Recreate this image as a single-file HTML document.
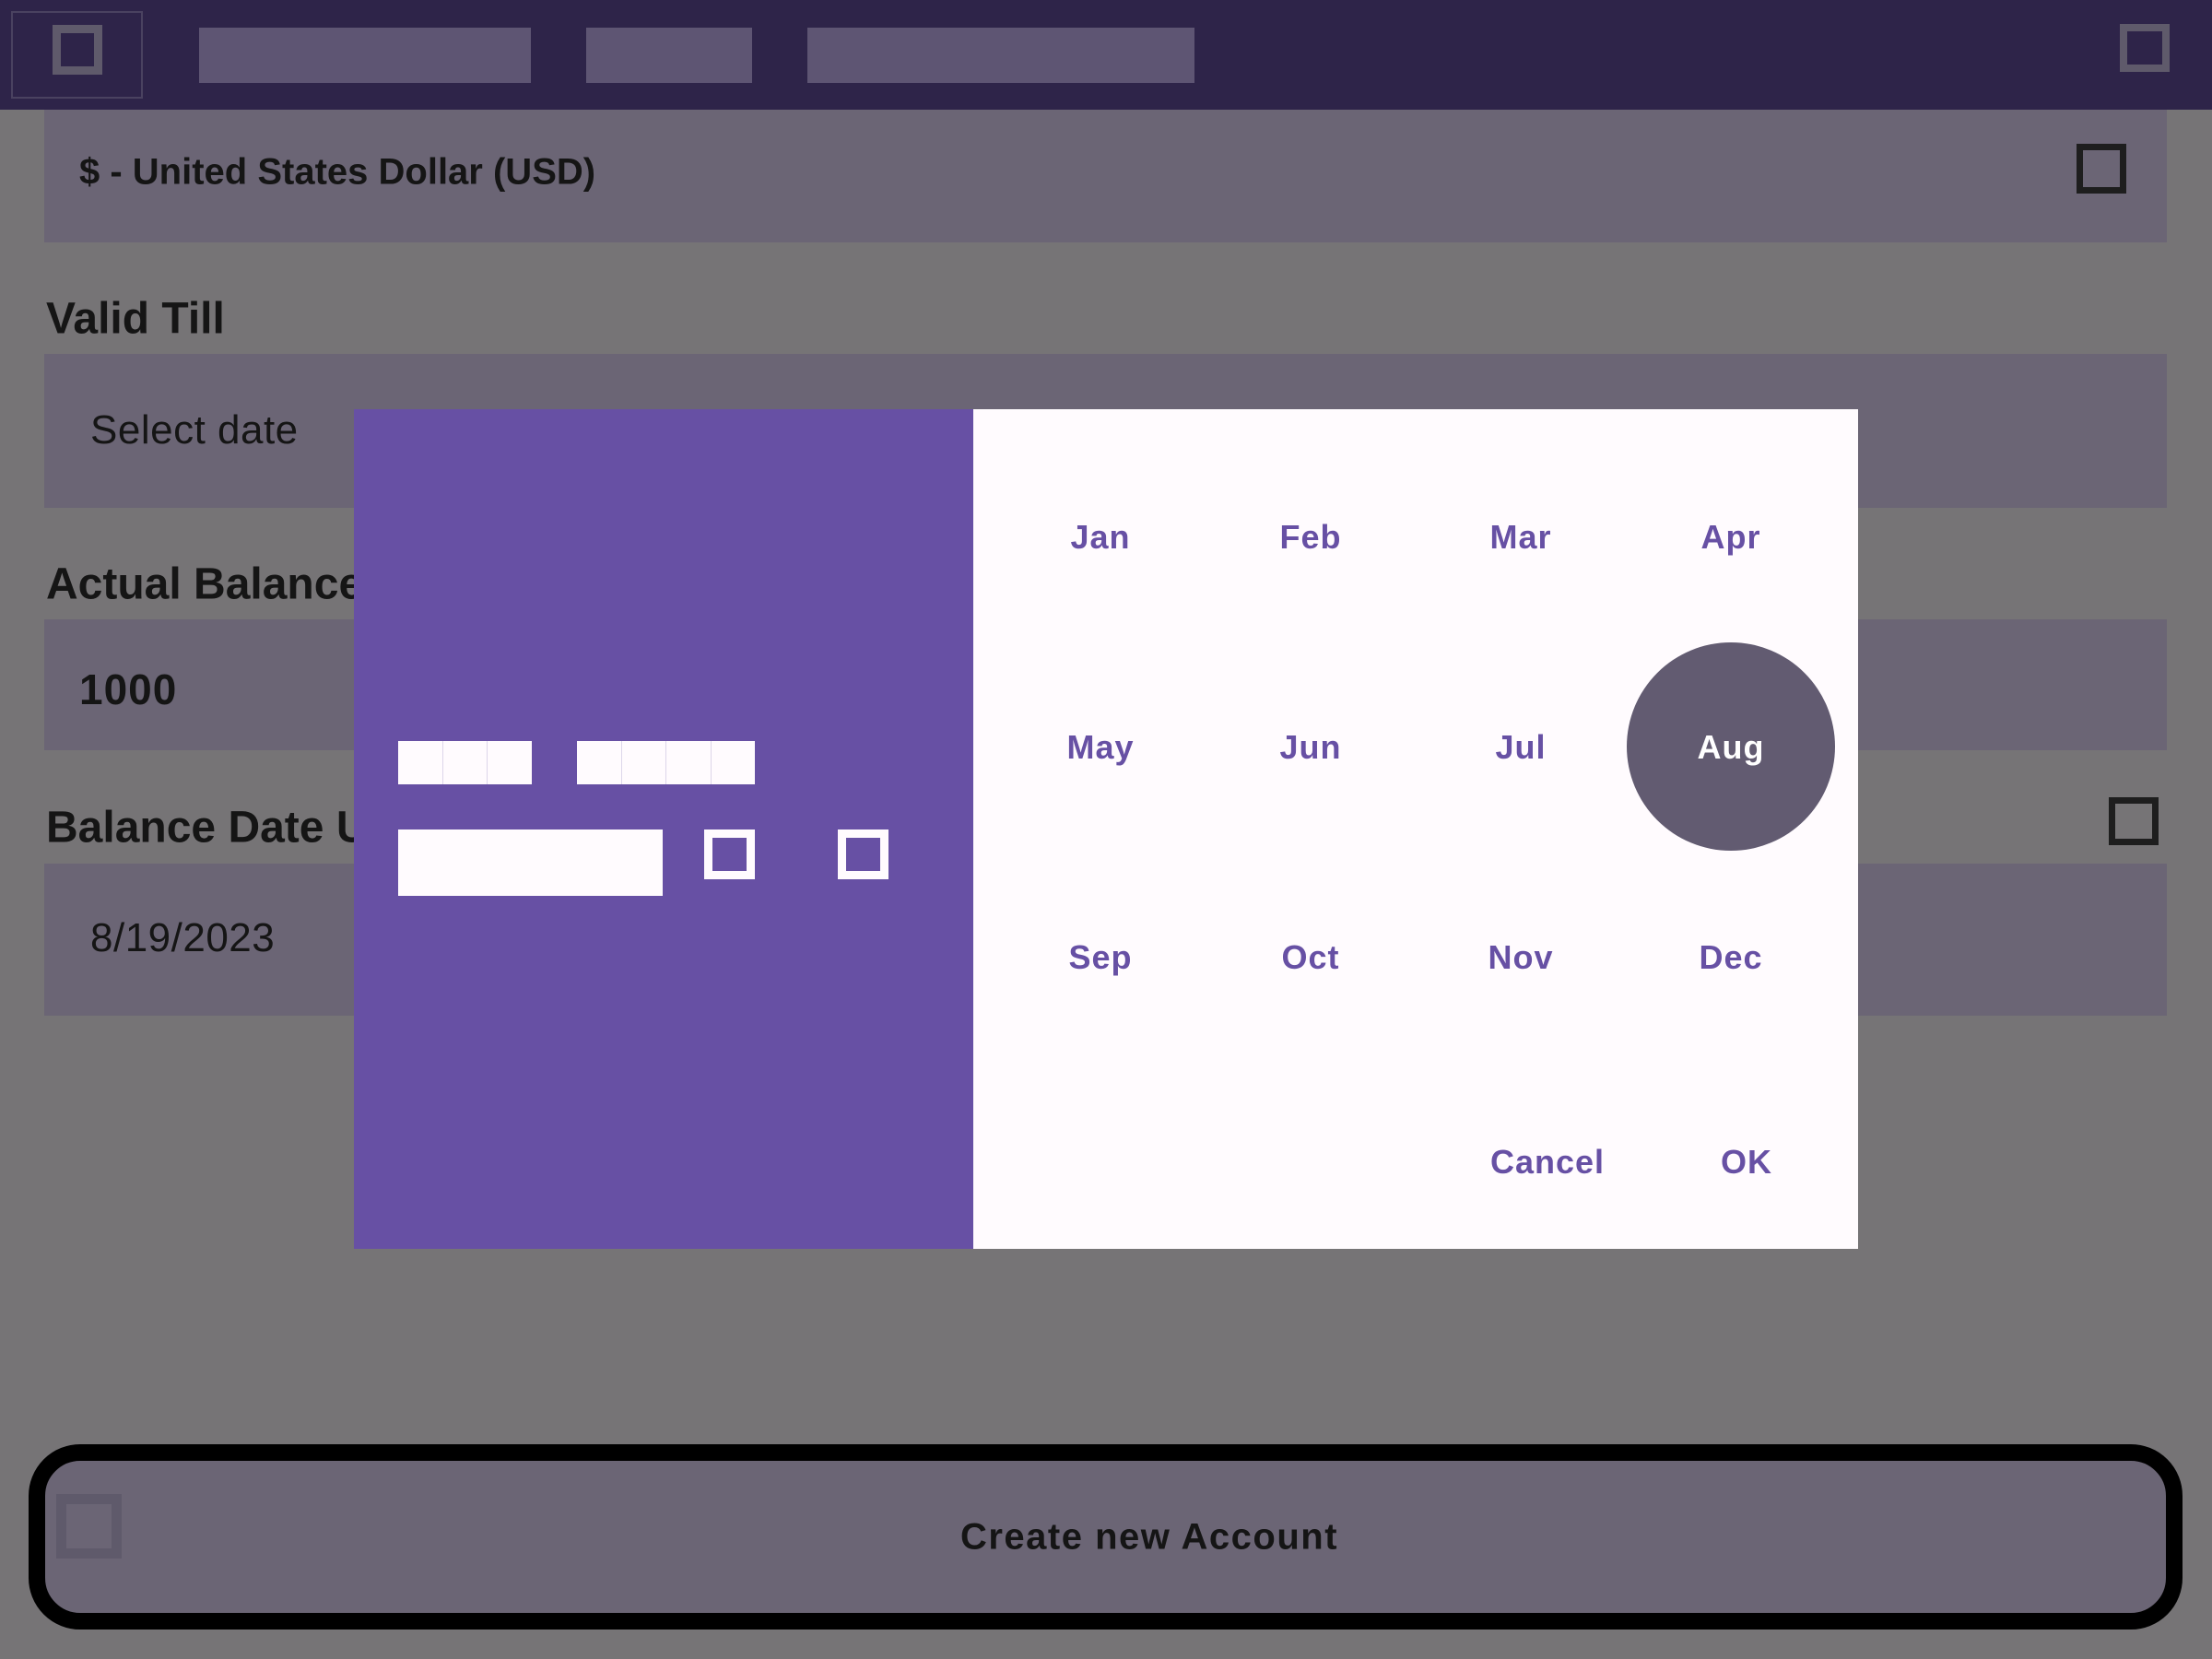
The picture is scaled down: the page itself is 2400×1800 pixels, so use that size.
<!DOCTYPE html>
<html><head><meta charset="utf-8"><style>
*{margin:0;padding:0;box-sizing:border-box}
body{width:2400px;height:1800px;background:#767476;position:relative;overflow:hidden;font-family:"Liberation Sans",sans-serif;color:#151515}
.a{position:absolute}
.t{position:absolute;white-space:nowrap;transform:translateY(-50%)}
.sq{position:absolute;border-style:solid;background:transparent}
.m{position:absolute;width:200px;margin-left:-100px;text-align:center;transform:translateY(-50%);color:#6750a4;font-weight:bold;font-size:36px;letter-spacing:1px}
</style></head><body>
<div class="a" style="left:0;top:0;width:2400px;height:119px;background:#2e2449"></div>
<div class="a" style="left:12px;top:12px;width:143px;height:95px;border:2px solid #4a4260"></div>
<div class="sq" style="left:57px;top:27px;width:54px;height:54px;border-width:9px;border-color:#5f5a6b"></div>
<div class="a" style="left:216px;top:30px;width:360px;height:60px;background:#5e5573"></div>
<div class="a" style="left:636px;top:30px;width:180px;height:60px;background:#5e5573"></div>
<div class="a" style="left:876px;top:30px;width:420px;height:60px;background:#5e5573"></div>
<div class="sq" style="left:2300px;top:26px;width:54px;height:52px;border-width:8px;border-color:#5f5a6b"></div>

<div class="a" style="left:48px;top:119px;width:2303px;height:144px;background:#6b6575"></div>
<div class="t" style="left:86px;top:187px;font-size:40px;font-weight:bold;letter-spacing:0">$ - United States Dollar (USD)</div>
<div class="sq" style="left:2253px;top:156px;width:54px;height:54px;border-width:7px;border-color:#1e1e1e"></div>

<div class="t" style="left:50px;top:346px;font-size:48px;font-weight:bold">Valid Till</div>
<div class="a" style="left:48px;top:384px;width:2303px;height:167px;background:#6b6575"></div>
<div class="t" style="left:98px;top:467px;font-size:44px;letter-spacing:0.5px">Select date</div>

<div class="t" style="left:50px;top:634px;font-size:48px;font-weight:bold">Actual Balance</div>
<div class="a" style="left:48px;top:672px;width:2303px;height:142px;background:#6b6575"></div>
<div class="t" style="left:86px;top:748px;font-size:46px;font-weight:bold;letter-spacing:1px">1000</div>

<div class="t" style="left:50px;top:898px;font-size:48px;font-weight:bold">Balance Date Updated</div>
<div class="sq" style="left:2288px;top:865px;width:54px;height:52px;border-width:7px;border-color:#1e1e1e"></div>
<div class="a" style="left:48px;top:937px;width:2303px;height:165px;background:#6b6575"></div>
<div class="t" style="left:98px;top:1018px;font-size:44px;letter-spacing:0.5px">8/19/2023</div>

<div class="a" style="left:384px;top:444px;width:672px;height:911px;background:#6750a4"></div>
<div class="a" style="left:1056px;top:444px;width:960px;height:911px;background:#fffbfe"></div>
<div class="a" style="left:432px;top:804px;width:145px;height:47px;background:#fffbfe"></div>
<div class="a" style="left:480px;top:804px;width:1px;height:47px;background:#ddd6ea"></div>
<div class="a" style="left:528px;top:804px;width:1px;height:47px;background:#ddd6ea"></div>
<div class="a" style="left:626px;top:804px;width:193px;height:47px;background:#fffbfe"></div>
<div class="a" style="left:674px;top:804px;width:1px;height:47px;background:#ddd6ea"></div>
<div class="a" style="left:722px;top:804px;width:1px;height:47px;background:#ddd6ea"></div>
<div class="a" style="left:771px;top:804px;width:1px;height:47px;background:#ddd6ea"></div>
<div class="a" style="left:432px;top:900px;width:287px;height:72px;background:#fffbfe"></div>
<div class="sq" style="left:764px;top:900px;width:55px;height:54px;border-width:9px;border-color:#fffbfe"></div>
<div class="sq" style="left:909px;top:900px;width:55px;height:54px;border-width:9px;border-color:#fffbfe"></div>

<div class="m" style="left:1194px;top:583px">Jan</div>
<div class="m" style="left:1422px;top:583px">Feb</div>
<div class="m" style="left:1650px;top:583px">Mar</div>
<div class="m" style="left:1878px;top:583px">Apr</div>
<div class="m" style="left:1194px;top:811px">May</div>
<div class="m" style="left:1422px;top:811px">Jun</div>
<div class="m" style="left:1650px;top:811px">Jul</div>
<div class="a" style="left:1765px;top:697px;width:226px;height:226px;border-radius:50%;background:#625b71"></div>
<div class="m" style="left:1878px;top:811px;color:#fff">Aug</div>
<div class="m" style="left:1194px;top:1039px">Sep</div>
<div class="m" style="left:1422px;top:1039px">Oct</div>
<div class="m" style="left:1650px;top:1039px">Nov</div>
<div class="m" style="left:1878px;top:1039px">Dec</div>
<div class="m" style="left:1679px;top:1261px">Cancel</div>
<div class="m" style="left:1895px;top:1261px">OK</div>

<div class="a" style="left:31px;top:1567px;width:2337px;height:201px;border:18px solid #000;border-radius:56px;background:#6b6575"></div>
<div class="sq" style="left:61px;top:1621px;width:71px;height:70px;border-width:11px;border-color:#5f5a6b"></div>
<div class="t" style="left:1247px;top:1668px;transform:translate(-50%,-50%);font-size:40px;font-weight:bold;letter-spacing:1.5px">Create new Account</div>
</body></html>
